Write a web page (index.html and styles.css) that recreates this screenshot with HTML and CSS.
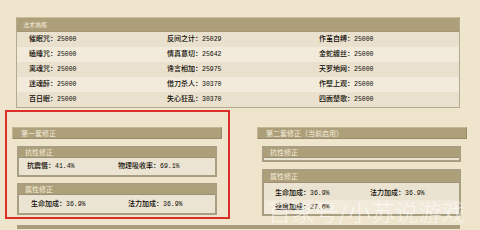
FILE: index.html
```html
<!DOCTYPE html>
<html>
<head>
<meta charset="utf-8">
<link rel="stylesheet" href="styles.css">
</head>
<body>
<div class="page">
  <div class="skills">
    <div class="bar bar-skills">法术熟练</div>
    <div class="skill-row odd">
      <span class="c1">催眠咒：<b>25000</b></span><span class="c2">反间之计：<b>25029</b></span><span class="c3">作茧自缚：<b>25000</b></span>
    </div>
    <div class="skill-row even">
      <span class="c1">瞌睡咒：<b>25000</b></span><span class="c2">情真意切：<b>25642</b></span><span class="c3">金蛇缠丝：<b>25000</b></span>
    </div>
    <div class="skill-row odd">
      <span class="c1">离魂咒：<b>25000</b></span><span class="c2">谗言相加：<b>25975</b></span><span class="c3">天罗地网：<b>25000</b></span>
    </div>
    <div class="skill-row even">
      <span class="c1">迷魂醉：<b>25000</b></span><span class="c2">借刀杀人：<b>30370</b></span><span class="c3">作壁上观：<b>25000</b></span>
    </div>
    <div class="skill-row odd">
      <span class="c1">百日眠：<b>25000</b></span><span class="c2">失心狂乱：<b>30370</b></span><span class="c3">四面楚歌：<b>25000</b></span>
    </div>
  </div>

  <div class="sets">
    <div class="set set-left">
      <div class="bar set-bar">第一套修正</div>
      <div class="box box-resist">
        <div class="bar box-bar">抗性修正</div>
        <div class="box-row row-resist">
          <span>抗震慑：<b>41.4%</b></span><span>物理吸收率：<b>69.1%</b></span>
        </div>
      </div>
      <div class="box box-attr">
        <div class="bar box-bar">属性修正</div>
        <div class="box-row row-attr">
          <span>生命加成：<b>36.9%</b></span><span>法力加成：<b>36.9%</b></span>
        </div>
      </div>
    </div>
    <div class="set set-right">
      <div class="bar set-bar">第二套修正（当前启用）</div>
      <div class="box box-empty">
        <div class="bar box-bar">抗性修正</div>
      </div>
      <div class="box box-attr2">
        <div class="bar box-bar box-bar-tall">属性修正</div>
        <div class="box-row row-attr2 light1">
          <span>生命加成：<b>36.9%</b></span><span>法力加成：<b>36.9%</b></span>
        </div>
        <div class="box-row row-attr2 light2">
          <span>速度加成：<b>27.6%</b></span>
        </div>
      </div>
    </div>
  </div>
  <div class="next-bar"></div>

  <div class="highlight"></div>
  <div class="watermark">百家号/小苏说游戏</div>
</div>
</body>
</html>
```
FILE: styles.css
```css
html, body {
  margin: 0;
  padding: 0;
  background: #efe5cd;
}
.page {
  position: relative;
  width: 480px;
  height: 230px;
  overflow: hidden;
  font-family: "Noto Sans CJK SC", sans-serif;
  font-size: 7px;
  font-weight: 500;
  color: #0e0b06;
}
b {
  font-weight: normal;
  font-family: "Liberation Mono", "Noto Sans CJK SC", monospace;
  font-size: 6.5px;
}
.bar {
  background: #ae9f7b;
  color: #f4eddb;
  font-weight: normal;
  box-sizing: border-box;
  display: flex;
  align-items: center;
  line-height: 1;
}
.skills {
  margin: 17px 0 0 16px;
  width: 444px;
  box-sizing: border-box;
  border: 1px solid #b3aa90;
  border-top: none;
  background: #ece4d2;
}
.bar-skills {
  height: 15px;
  padding-left: 6px;
  font-size: 6px;
  border-top: 1px solid #c9bc98;
  border-bottom: 1px solid #a39577;
}
.skill-row {
  display: grid;
  grid-template-columns: 138px 152px 1fr;
  height: 15px;
  align-items: center;
  padding-left: 12px;
  line-height: 1;
}
.skill-row.odd { background: #e9e0cd; }
.skill-row.even { background: #f2ebdb; }

.sets {
  display: flex;
  gap: 35px;
  margin-top: 19px;
  padding-left: 12px;
}
.set {
  width: 210px;
}
.set-bar {
  height: 12px;
  padding-left: 8px;
  border: 1px solid #c4b793;
  border-right-color: #988b6c;
  border-bottom-color: #988b6c;
}
.box {
  margin: 7px 5px 0 5px;
  border: 2px solid #a89e82;
  background: #ece4d3;
}
.box-attr { margin-top: 6px; }
.box-bar {
  height: 10px;
  padding-left: 6px;
  border-bottom: 1px solid #9d9276;
}
.box-row {
  display: grid;
  align-items: center;
  line-height: 1;
}
.row-resist {
  height: 17px;
  grid-template-columns: 91px 1fr;
  padding-left: 8px;
}
.row-attr {
  height: 18px;
  grid-template-columns: 97px 1fr;
  padding-left: 12px;
}
.set-right .box { margin-right: 6px; }
.box-empty { padding-bottom: 2px; }
.box-attr2 { margin-top: 7px; }
.box-bar-tall { height: 12px; }
.row-attr2 {
  height: 14px;
  grid-template-columns: 95px 1fr;
  padding-left: 11px;
}
.light1 { background: #ebe3d1; margin-top: 3px; }
.light2 { background: #f1eadb; }

.next-bar {
  margin: 9px 0 0 17px;
  width: 443px;
  height: 4px;
  background: #aa9d7d;
}
.highlight {
  position: absolute;
  left: 5px;
  top: 110px;
  width: 225px;
  height: 109px;
  box-sizing: border-box;
  border: 2px solid #dc2f2a;
}
.watermark {
  position: absolute;
  left: 268px;
  top: 194px;
  font-size: 23px;
  color: rgba(255, 255, 255, 0.6);
  font-weight: 300;
  letter-spacing: 0.5px;
  white-space: nowrap;
}
```
